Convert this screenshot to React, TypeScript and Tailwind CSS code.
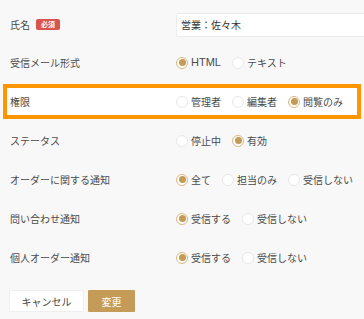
const FONT = { fontFamily: '"Noto Sans CJK JP", "Noto Sans", sans-serif' };

type Row = { label: string; options: string[]; selected: number; highlight?: boolean };

const ROWS: Row[] = [
  { label: "受信メール形式", options: ["HTML", "テキスト"], selected: 0 },
  { label: "権限", options: ["管理者", "編集者", "閲覧のみ"], selected: 2, highlight: true },
  { label: "ステータス", options: ["停止中", "有効"], selected: 1 },
  { label: "オーダーに関する通知", options: ["全て", "担当のみ", "受信しない"], selected: 0 },
  { label: "問い合わせ通知", options: ["受信する", "受信しない"], selected: 0 },
  { label: "個人オーダー通知", options: ["受信する", "受信しない"], selected: 0 },
];

function Radio({ checked }: { checked: boolean }) {
  return checked ? (
    <span className="w-[12px] h-[12px] rounded-full border border-[#d8b87f] bg-white flex items-center justify-center shrink-0">
      <span className="w-[7px] h-[7px] rounded-full bg-[#c39b55]" />
    </span>
  ) : (
    <span className="w-[12px] h-[12px] rounded-full border border-[#e8e8e8] bg-white shrink-0" />
  );
}

export default function App() {
  return (
    <div className="w-[364px] h-[319px] overflow-hidden bg-[#f8f8f8] text-[#4a4a4a]" style={FONT}>
      <div className="flex flex-col px-[3px] pt-[7px] gap-[4px]">
        {/* Name */}
        <div className="h-[35px] flex items-center border-4 border-transparent pl-[3px]">
          <div className="w-[166px] flex items-center gap-[6px] shrink-0">
            <span className="text-[10px]">氏名</span>
            <span className="bg-[#d9534f] text-white text-[7px] leading-none px-[5px] py-[2px] rounded-[2px] font-bold">
              必須
            </span>
          </div>
          <div className="w-[220px] h-[24px] shrink-0 bg-white border border-[#ececec] rounded-[2px] flex items-center px-[4px] text-[10px] text-[#333]">
            営業：佐々木
          </div>
        </div>

        {ROWS.map((row, idx) => (
          <div
            key={row.label}
            className={
              row.highlight
                ? "h-[35px] flex items-center border-4 border-[#ff9500] bg-white pl-[3px]"
                : idx === 0
                ? "h-[35px] -mt-[1px] flex items-center border-4 border-transparent pl-[3px]"
                : "h-[35px] flex items-center border-4 border-transparent pl-[3px]"
            }>
            <div className="w-[166px] text-[10px] shrink-0">{row.label}</div>
            <div className="flex items-center gap-[11px] text-[10px]">
              {row.options.map((opt, i) => (
                <label key={opt} className="flex items-center gap-[3px]">
                  <Radio checked={i === row.selected} />
                  <span style={opt === "HTML" ? { fontFamily: '"Liberation Sans", sans-serif', fontSize: "11px" } : undefined}>
                    {opt}
                  </span>
                </label>
              ))}
            </div>
          </div>
        ))}

        {/* Buttons */}
        <div className="flex gap-[4px] pl-[6px] mt-[11px]">
          <button className="w-[75px] h-[22px] bg-white border border-[#f0f0f0] text-[10px] text-[#444] rounded-[1px]">
            キャンセル
          </button>
          <button className="w-[47px] h-[22px] bg-[#c49b57] text-white text-[10px] rounded-[1px]">
            変更
          </button>
        </div>
      </div>
    </div>
  );
}
